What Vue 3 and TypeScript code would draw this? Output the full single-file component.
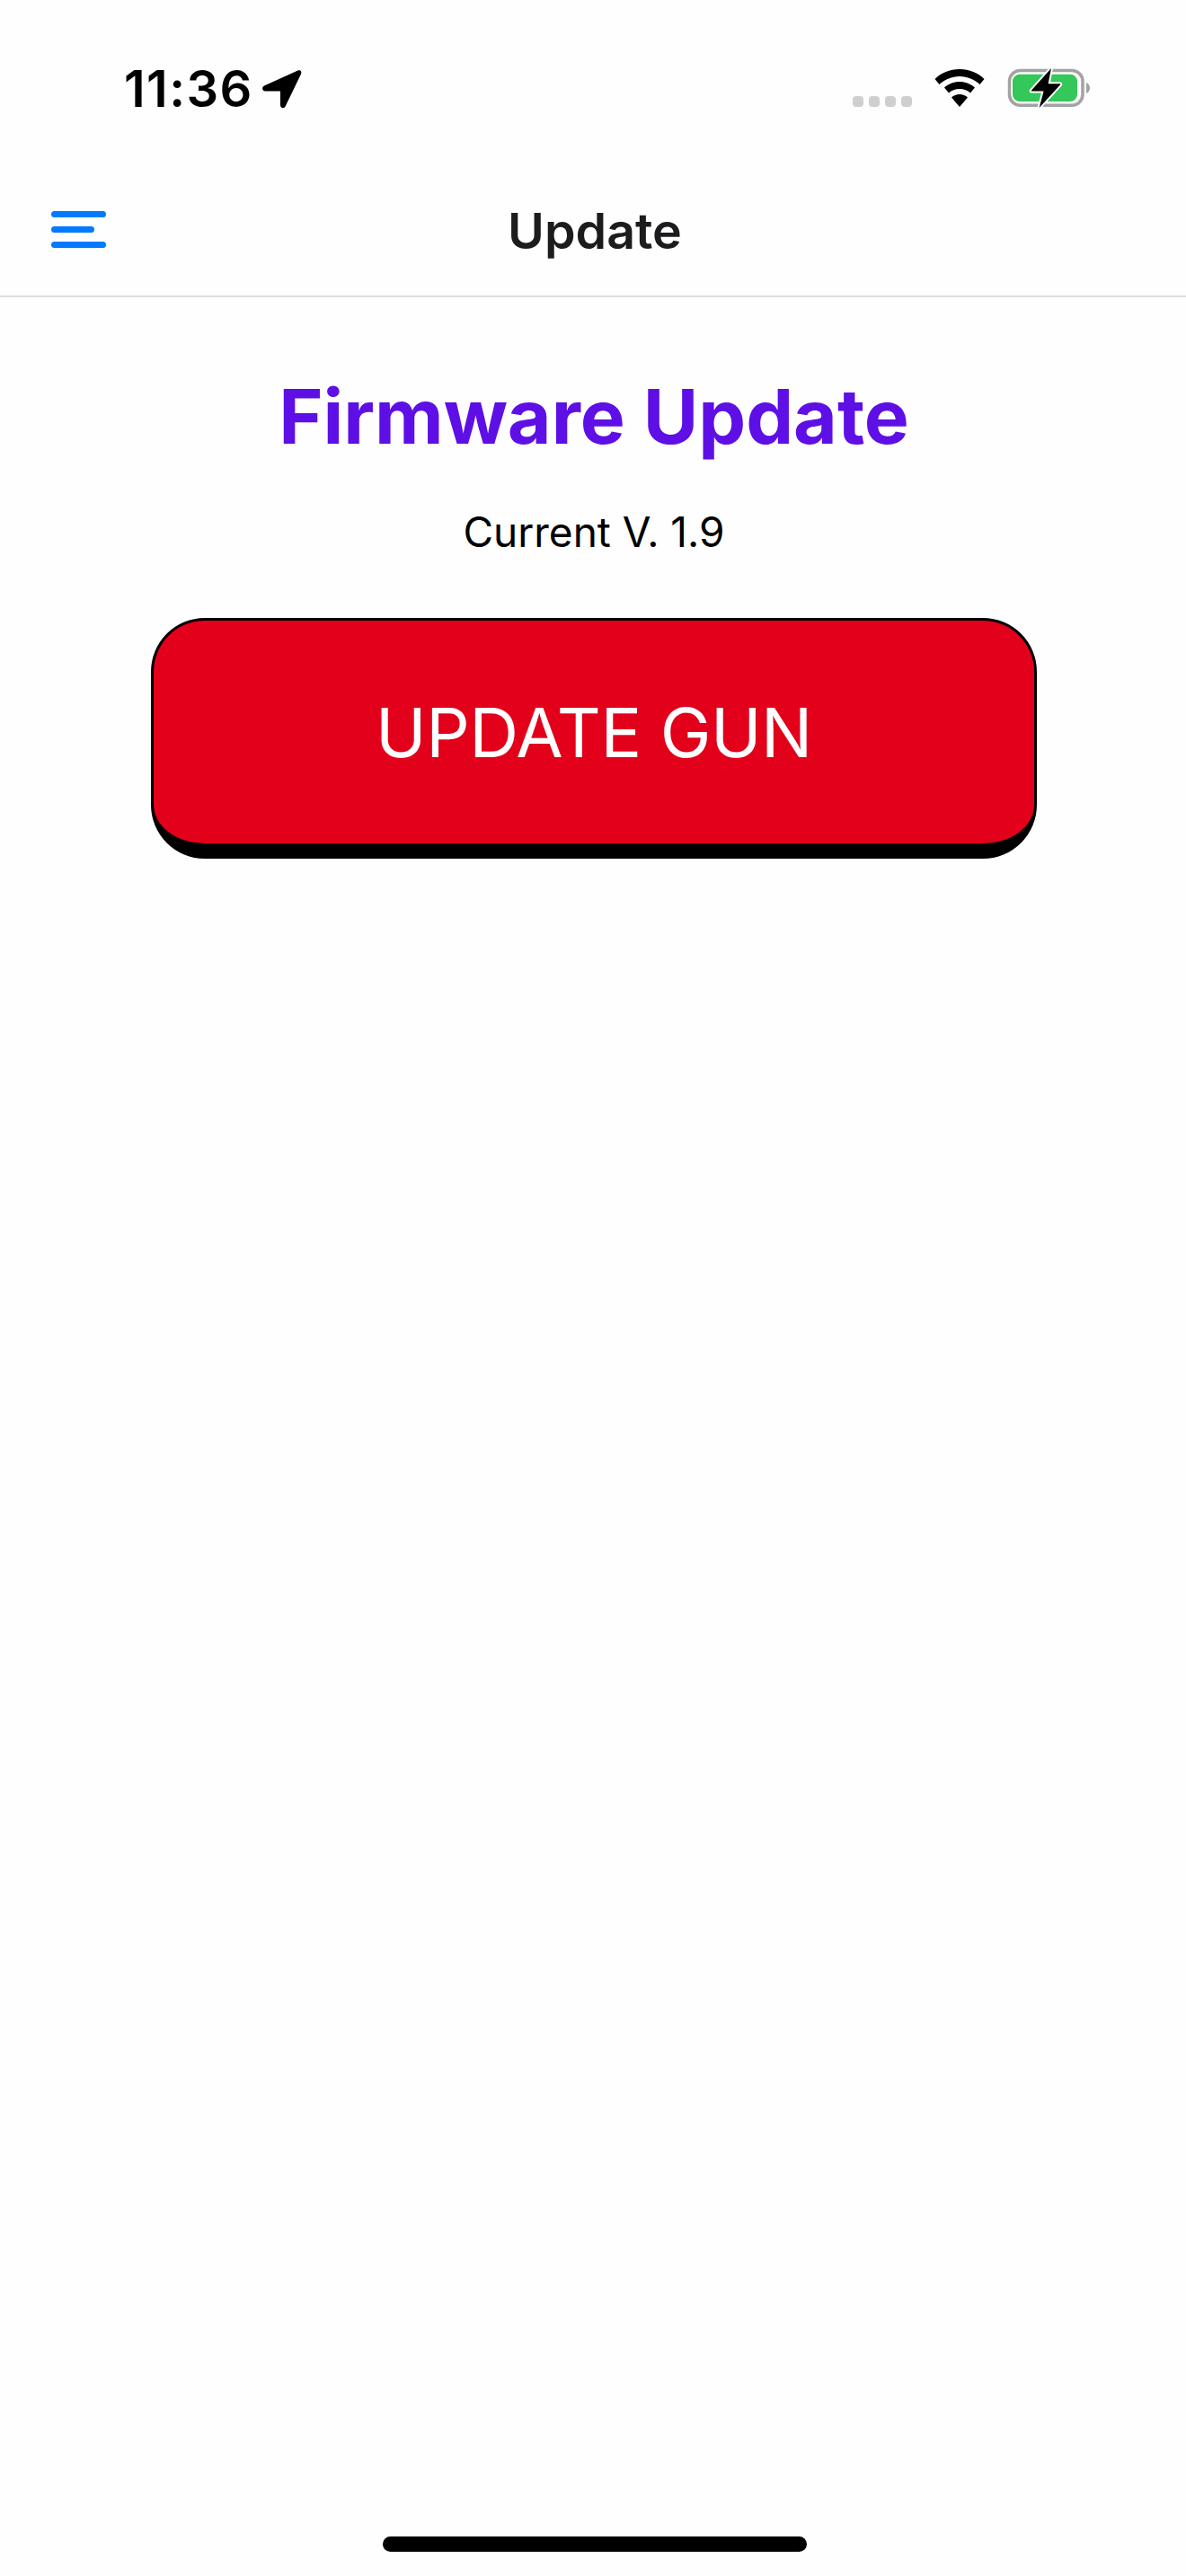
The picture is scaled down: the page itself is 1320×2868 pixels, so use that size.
<script setup lang="ts">
const currentVersion = '1.9'
</script>

<template>
  <div class="screen">
    <div class="status-bar">
      <div class="status-left">
        <span class="time">11:36</span>
        <svg class="arrow" width="46" height="46" viewBox="0 0 46 46">
          <path d="M40.500 2.600 3 19.600c-3 1.400-2.200 5.900 1.200 6H21v15.500c0 3.500 4.400 4.300 5.700 1.200L44 6.500c1.200-2.700-.8-5-3.500-3.900Z" fill="#000" />
        </svg>
      </div>
      <div class="status-right">
        <div class="dots">
          <i></i><i></i><i></i><i></i>
        </div>
        <svg class="wifi" width="58" height="44" viewBox="0 0 58 44">
          <path d="M29 1C18 1 8.500 5 1.500 12l5 6C12.500 12.500 20.500 9 29 9s16.500 3.500 22.500 9l5-6C49.500 5 40 1 29 1Z" fill="#000" />
          <path d="M29 15c-6.500 0-12.500 2.500-17 6.500l5 6c3-2.800 7.300-4.500 12-4.500s9 1.700 12 4.500l5-6C41.500 17.500 35.500 15 29 15Z" fill="#000" />
          <path d="M29 29c-3.500 0-6.700 1.300-9 3.500L29 43l9-10.500C35.700 30.300 32.500 29 29 29Z" fill="#000" />
        </svg>
        <svg class="battery" width="94" height="48" viewBox="0 0 94 48">
          <rect x="3.500" y="4.500" width="81.500" height="38.700" rx="12" fill="none" stroke="#a3a3a3" stroke-width="3.500" />
          <path d="M89 18c2.500 1 4 3.200 4 6s-1.500 5-4 6Z" fill="#a3a3a3" />
          <rect x="7" y="8.700" width="72" height="30.300" rx="8" fill="#34c759" />
          <path d="M50 2 28 26.500q-1 1.100 1 1.100h12.600L36.600 46 60 20.500q1-1.200-1-1.200H46.600Z" fill="#000" stroke="#fefefe" stroke-width="4" stroke-linejoin="round" paint-order="stroke" />
        </svg>
      </div>
    </div>

    <header class="nav-bar">
      <button class="menu-btn" aria-label="Menu">
        <span class="line"></span>
        <span class="line short"></span>
        <span class="line"></span>
      </button>
      <span class="nav-title">Update</span>
    </header>

    <main class="content">
      <h1 class="heading">Firmware Update</h1>
      <p class="version">Current V. {{ currentVersion }}</p>
      <button class="update-btn">UPDATE GUN</button>
    </main>

    <div class="home-indicator"></div>
  </div>
</template>

<style>
html, body { background: #fefefe; }
</style>

<style scoped>
.screen {
  position: relative;
  display: flex;
  flex-direction: column;
  width: 1320px;
  height: 2868px;
  overflow: hidden;
  background: #fefefe;
  font-family: Inter, "Liberation Sans", sans-serif;
  color: #000;
}
.status-bar {
  display: flex;
  justify-content: space-between;
  align-items: flex-start;
  height: 170px;
  padding: 0 106px 0 138px;
  box-sizing: border-box;
}
.status-left {
  display: flex;
  align-items: center;
  gap: 9px;
  padding-top: 67px;
}
.time {
  font-size: 56px;
  font-weight: 600;
  line-height: 64px;
  letter-spacing: 1.4px;
}
.status-right {
  display: flex;
  align-items: flex-start;
  padding-top: 74px;
}
.dots {
  display: flex;
  gap: 6px;
  margin: 33px 24px 0 0;
}
.dots i {
  width: 12px;
  height: 12px;
  border-radius: 4px;
  background: #cfcfcf;
}
.wifi { margin: 2px 23px 0 0; }
.nav-bar {
  position: relative;
  display: flex;
  align-items: center;
  justify-content: center;
  height: 161px;
  padding: 14px 0 0 4px;
  box-sizing: border-box;
  border-bottom: 2px solid #dedede;
}
.menu-btn {
  position: absolute;
  left: 57px;
  top: 65px;
  display: flex;
  flex-direction: column;
  gap: 10px;
  width: 61px;
  padding: 0;
  border: 0;
  background: none;
}
.line {
  width: 61px;
  height: 7px;
  border-radius: 4px;
  background: #007aff;
}
.line.short { width: 48px; }
.nav-title {
  font-size: 55.5px;
  font-weight: 600;
  color: #1c1c1e;
}
.content {
  display: flex;
  flex-direction: column;
  align-items: center;
}
.heading {
  margin: 83px 0 0 2px;
  font-size: 84px;
  line-height: 100px;
  font-weight: 700;
  color: #5e0fe6;
}
.version {
  margin: 50px 0 0 2px;
  font-size: 46px;
  line-height: 56px;
  font-weight: 400;
}
.update-btn {
  width: 986px;
  height: 268px;
  margin: 68px 0 0 2px;
  box-sizing: border-box;
  border: 3px solid #000;
  border-bottom-width: 17px;
  border-radius: 60px;
  background: #e2001a;
  color: #fff;
  font-family: inherit;
  font-size: 76px;
  font-weight: 400;
  letter-spacing: -0.4px;
}
.home-indicator {
  position: absolute;
  left: 426px;
  top: 2824px;
  width: 472px;
  height: 17px;
  border-radius: 9px;
  background: #000;
}
</style>
